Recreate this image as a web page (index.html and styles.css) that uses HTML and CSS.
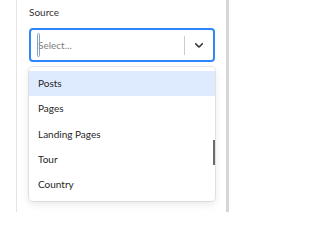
FILE: index.html
```html
<!DOCTYPE html>
<html>
<head>
<meta charset="utf-8">
<link rel="stylesheet" href="styles.css">
</head>
<body>
<div class="page">
  <div class="panel">
    <div class="field">
      <label class="label">Source</label>
      <div class="select">
        <div class="value">
          <span class="placeholder">Select...</span>
          <span class="caret"></span>
        </div>
        <span class="sep"></span>
        <span class="indicator">
          <svg width="14" height="14" viewBox="0 0 20 20" aria-hidden="true"><path d="M4.516 7.548c0.436-0.446 1.043-0.481 1.576 0l3.908 3.747 3.908-3.747c0.533-0.481 1.141-0.446 1.574 0 0.436 0.445 0.408 1.197 0 1.615-0.406 0.418-4.695 4.502-4.695 4.502-0.217 0.223-0.502 0.335-0.787 0.335s-0.57-0.112-0.789-0.335c0 0-4.287-4.084-4.695-4.502s-0.436-1.17 0-1.615z"/></svg>
        </span>
      </div>
      <div class="menu">
        <div class="option active">Posts</div>
        <div class="option">Pages</div>
        <div class="option">Landing Pages</div>
        <div class="option">Tour</div>
        <div class="option">Country</div>
        <span class="thumb"></span>
      </div>
    </div>
  </div>
  <div class="edge"></div>
</div>
</body>
</html>
```

FILE: styles.css
```css
html, body {
  margin: 0;
  padding: 0;
  background: #ffffff;
}
body {
  font-family: "Lato", "Liberation Sans", sans-serif;
  font-size: 10px;
  color: #2b2b2b;
}
.page {
  display: flex;
  height: 212px;
  overflow: hidden;
}
.panel {
  margin-left: 16px;
  border-left: 1px solid #e4e4e4;
  padding-left: 12px;
  width: 210px;
  height: 212px;
  box-sizing: border-box;
  flex: none;
}
.edge {
  flex: none;
  width: 3px;
  height: 212px;
  background: #d6d6d6;
}
.field {
  display: flex;
  flex-direction: column;
  width: 186px;
}
.label {
  display: block;
  line-height: 14px;
  padding-top: 5px;
  height: 28px;
  box-sizing: border-box;
  color: #333333;
}
.select {
  position: relative;
  display: flex;
  align-items: center;
  height: 34px;
  box-sizing: border-box;
  border: 2px solid #2e86fb;
  border-radius: 4px;
  background: #fff;
}
.value {
  position: relative;
  flex: 1;
  display: flex;
  align-items: center;
  padding-left: 7px;
  height: 100%;
}
.placeholder {
  color: #7f7f7f;
  line-height: 14px;
}
.caret {
  position: absolute;
  left: 6px;
  top: 3px;
  width: 3px;
  height: 24px;
  box-sizing: border-box;
  border: 1px solid #7f9fc8;
  border-radius: 2px;
}
.sep {
  width: 1px;
  height: 19px;
  background: #cccccc;
  align-self: center;
}
.indicator {
  width: 27px;
  display: flex;
  align-items: center;
  justify-content: center;
  padding-right: 1px;
}
.indicator svg {
  fill: #3a3a3a;
  display: block;
}
.menu {
  position: relative;
  margin-top: 5px;
  padding: 4px 0;
  border-radius: 4px;
  background: #fff;
  box-shadow: 0 0 0 1px rgba(0,0,0,0.08), 0 3px 8px rgba(0,0,0,0.1);
}
.option {
  padding: 6px 9px;
  line-height: 13.3px;
  color: #262626;
}
.option.active {
  background: #deebff;
}
.thumb {
  position: absolute;
  right: 0;
  top: 73px;
  width: 2px;
  height: 25px;
  background: #6a6a6a;
}
```
